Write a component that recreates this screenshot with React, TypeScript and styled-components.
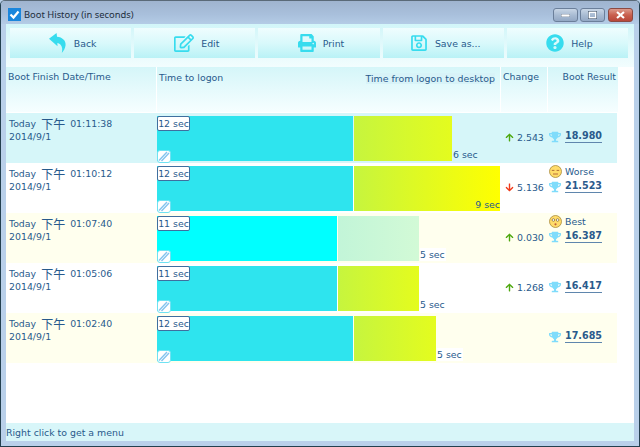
import React from "react";
import styled, { createGlobalStyle } from "styled-components";
import { FaArrowDown, FaArrowUp, FaPrint, FaQuestionCircle, FaRegEdit, FaRegSave, FaTrophy } from "react-icons/fa";

const GlobalStyle = createGlobalStyle`
  html, body {
    margin: 0;
    padding: 0;
    background: #b9cfe8;
  }
`;

const TEXT = "#285a8c";
const FONT = `"DejaVu Sans", "Noto Sans CJK TC", sans-serif`;

const Window = styled.div`
  width: 640px;
  height: 447px;
  box-sizing: border-box;
  display: flex;
  flex-direction: column;
  overflow: hidden;
  font-family: ${FONT};
  font-size: 9.4px;
  color: ${TEXT};
  background: #b9d0ea;
  border: 1px solid #24404f;
  border-top-color: #5a6a78;
  border-radius: 5px 5px 0 0;
`;

const TitleBar = styled.div`
  height: 23px;
  flex: none;
  display: flex;
  align-items: flex-start;
  padding: 7px 6px 0 7px;
  box-sizing: border-box;
  gap: 3px;
  background: linear-gradient(180deg, #9fb4cf 0%, #a9c0dc 60%, #b4cce6 100%);
`;

const TitleText = styled.span`
  flex: 1;
  font-family: "Noto Sans", sans-serif;
  font-size: 9.4px;
  line-height: 14px;
  color: #1d2e3d;
`;

const WinButtons = styled.div`
  display: flex;
  gap: 2px;
`;

const WinButton = styled.div<{ $close?: boolean }>`
  width: 25px;
  height: 14px;
  box-sizing: border-box;
  display: flex;
  align-items: center;
  justify-content: center;
  border: 1px solid ${({ $close }) => ($close ? "#8c4a42" : "#6b7f9a")};
  border-radius: 3px;
  margin-left: ${({ $close }) => ($close ? "1px" : "0")};
  background: ${({ $close }) =>
    $close
      ? "linear-gradient(180deg, #dc9a8c 0%, #c9604f 50%, #b8473a 100%)"
      : "linear-gradient(180deg, #c8d6e6 0%, #a9bcd3 50%, #93a8c4 100%)"};
`;

const Client = styled.div`
  flex: 1;
  min-height: 0;
  display: flex;
  flex-direction: column;
  margin: 0 5px 5px 5px;
  background: #fff;
`;

const Toolbar = styled.div`
  height: 43px;
  flex: none;
  box-sizing: border-box;
  display: flex;
  gap: 3px;
  padding: 4px 6px 9px 4px;
  background: linear-gradient(180deg, #d2f6f9 0%, #f2fdfe 100%);
`;

const ToolButton = styled.div`
  flex: 1;
  display: flex;
  align-items: center;
  justify-content: center;
  gap: 7px;
  padding-left: 4px;
  background: linear-gradient(180deg, #effdfe 0%, #d9f9fb 50%, #b9f2f6 100%);
  svg {
    color: #37dcee;
  }
`;

const Table = styled.div`
  width: 611px;
  display: flex;
  flex-direction: column;
`;

const HeaderRow = styled.div`
  height: 46px;
  display: grid;
  grid-template-columns: 150px 343px 46px 70px;
  column-gap: 1px;
  background: #fff;
`;

const HeaderCell = styled.div<{ $right?: boolean }>`
  height: 45px;
  box-sizing: border-box;
  padding: 4px 2px 0 2px;
  text-align: ${({ $right }) => ($right ? "right" : "left")};
  background: linear-gradient(180deg, #d5f6f9 0%, #f6feff 100%);
`;

const HeaderLabels = styled(HeaderCell)`
  display: flex;
  justify-content: space-between;
  align-items: flex-start;
  padding: 5px 5px 0 2px;
`;

const DesktopLabel = styled.span`
  margin-top: 1px;
  background: #d8f3f8;
`;

const Row = styled.div<{ $bg: string }>`
  height: 50px;
  display: grid;
  grid-template-columns: 151px 343px 46px 71px;
  background: ${({ $bg }) => $bg};
`;

const DateCell = styled.div`
  padding: 3px 0 0 3px;
`;

const DateTop = styled.div`
  display: flex;
  gap: 5px;
  height: 14px;
  align-items: center;
`;

const Cjk = styled.span`
  font-size: 12px;
`;

const DateBottom = styled.div`
  line-height: 13px;
`;

const BarCell = styled.div`
  display: flex;
  padding-top: 3px;
`;

const Bar = styled.div<{ $width: number; $fill: string }>`
  height: 45px;
  width: ${({ $width }) => $width}px;
  flex: none;
  background: ${({ $fill }) => $fill};
  margin-right: 1px;
`;

const LogonBar = styled(Bar)`
  position: relative;
`;

const LogonLabel = styled.div`
  position: absolute;
  top: 0;
  left: 0;
  width: 33px;
  height: 15px;
  box-sizing: border-box;
  background: #fff;
  border: 1px solid #3f6f9f;
  border-radius: 2px;
  line-height: 13px;
  white-space: nowrap;
  text-align: center;
`;

const NoteIcon = styled.svg`
  position: absolute;
  left: 0;
  bottom: -2px;
`;

const DesktopBar = styled(Bar)`
  position: relative;
  margin-right: 0;
`;

const SecInside = styled.span`
  position: absolute;
  right: 0;
  bottom: 0;
  line-height: 13px;
`;

const SecAfter = styled.span<{ $plate: boolean }>`
  align-self: flex-end;
  margin-left: 1px;
  padding-right: 1px;
  line-height: 13px;
  margin-bottom: 2px;
  background: ${({ $plate }) => ($plate ? "#fff" : "transparent")};
`;

const ChangeCell = styled.div`
  display: flex;
  align-items: center;
  gap: 3px;
  padding: 0 0 2px 5px;
`;

const ResultCell = styled.div`
  display: flex;
  flex-direction: column;
  padding: 2px 0 0 3px;
`;

const VerdictLine = styled.div`
  display: flex;
  align-items: center;
  gap: 3px;
  height: 13px;
`;

const ScoreLine = styled.div`
  display: flex;
  align-items: center;
  gap: 4px;
  height: 17px;
  svg {
    color: #7fdcfb;
  }
`;

const Score = styled.span`
  font-size: 9.6px;
  font-weight: 700;
  color: #2a5a8c;
  border-bottom: 1px solid #5f86ad;
  line-height: 12px;
`;

const Spacer = styled.div`
  flex: 1;
`;

const StatusBar = styled.div`
  height: 18px;
  flex: none;
  line-height: 19px;
  background: #d8f6f9;
`;

const BackIcon = () => (
  <svg width="18" height="20" viewBox="0 0 19 21">
    <path
      d="M0 6 L8 0 L8.5 4 C14 4.5 18 8 17.5 13 C17.2 16 15.5 19 13.5 21 C14.5 17.5 14 14 12 12 C11 11 10 10.5 8.8 10.4 L9 14 Z"
      fill="#37dcee"
    />
  </svg>
);

const Smiley = ({ worse }: { worse?: boolean }) => (
  <svg width="13" height="13" viewBox="0 0 13 13">
    <circle cx="6.5" cy="6.5" r="6" fill="#ffdc6a" stroke="#a98a3a" strokeWidth="0.8" />
    {worse ? (
      <>
        <path d="M2.8 5.4 H5.4 M7.6 5.4 H10.2" stroke="#b0703a" strokeWidth="1" />
        <path d="M4 9 H9" fill="none" stroke="#b0603a" strokeWidth="0.9" />
      </>
    ) : (
      <>
        <circle cx="4.4" cy="5" r="1.3" fill="#fff" stroke="#6a5020" strokeWidth="0.6" />
        <circle cx="8.6" cy="5" r="1.3" fill="#fff" stroke="#6a5020" strokeWidth="0.6" />
        <circle cx="6.5" cy="9.3" r="1.1" fill="#c0603a" />
      </>
    )}
  </svg>
);

const Note = () => (
  <NoteIcon width="14" height="13" viewBox="0 0 14 13">
    <rect x="0.5" y="0.5" width="13" height="12" rx="2.5" fill="#fff" stroke="#6fe2f2" />
    <path d="M2 10.5 L10 2 M4.5 11 L12 3" stroke="#84c4ee" strokeWidth="1.4" fill="none" />
  </NoteIcon>
);

const CYAN = "#2ee4ee";
const BRIGHT = "#00ffff";
const LIME = "linear-gradient(90deg, #c6f53e 0%, #e4fc1e 100%)";
const CREAM = "#ffffee";

type BootRow = {
  time: string;
  bg: string;
  logon: number;
  logonLabel: string;
  logonFill: string;
  desktop: number;
  desktopLabel: string;
  desktopFill: string;
  inside?: boolean;
  change?: string;
  down?: boolean;
  verdict?: "Worse" | "Best";
  score: string;
};

const rows: BootRow[] = [
  { time: "01:11:38", bg: "#d6f6f9", logon: 196, logonLabel: "12 sec", logonFill: CYAN, desktop: 98, desktopLabel: "6 sec", desktopFill: LIME, change: "2.543", score: "18.980" },
  { time: "01:10:12", bg: "#ffffff", logon: 196, logonLabel: "12 sec", logonFill: CYAN, desktop: 146, desktopLabel: "9 sec", desktopFill: "linear-gradient(90deg, #c6f53e 0%, #ffff00 100%)", inside: true, change: "5.136", down: true, verdict: "Worse", score: "21.523" },
  { time: "01:07:40", bg: CREAM, logon: 180, logonLabel: "11 sec", logonFill: BRIGHT, desktop: 81, desktopLabel: "5 sec", desktopFill: "linear-gradient(90deg, #c2f5d8 0%, #d2fad6 100%)", change: "0.030", verdict: "Best", score: "16.387" },
  { time: "01:05:06", bg: "#ffffff", logon: 180, logonLabel: "11 sec", logonFill: CYAN, desktop: 81, desktopLabel: "5 sec", desktopFill: LIME, change: "1.268", score: "16.417" },
  { time: "01:02:40", bg: CREAM, logon: 196, logonLabel: "12 sec", logonFill: CYAN, desktop: 82, desktopLabel: "5 sec", desktopFill: LIME, score: "17.685" },
];

const App: React.FC = () => (
  <Window>
    <GlobalStyle />
    <TitleBar>
      <svg width="13" height="13" viewBox="0 0 13 13">
        <rect width="13" height="13" fill="#1a86dc" />
        <path d="M2.5 6.5 L5.5 9.5 L10.5 3.5" stroke="#fff" strokeWidth="2.2" fill="none" />
      </svg>
      <TitleText>Boot History (in seconds)</TitleText>
      <WinButtons>
        <WinButton>
          <svg width="9" height="3" viewBox="0 0 9 3">
            <rect width="9" height="3" fill="#fff" stroke="#44556b" strokeWidth="0.6" />
          </svg>
        </WinButton>
        <WinButton>
          <svg width="9" height="8" viewBox="0 0 9 8">
            <rect x="1" y="1" width="7" height="6" fill="none" stroke="#fff" strokeWidth="2" />
            <rect x="0.3" y="0.3" width="8.4" height="7.4" fill="none" stroke="#44556b" strokeWidth="0.6" />
          </svg>
        </WinButton>
        <WinButton $close>
          <svg width="9" height="8" viewBox="0 0 9 8">
            <path d="M1 1 L8 7 M8 1 L1 7" stroke="#fff" strokeWidth="2.2" />
          </svg>
        </WinButton>
      </WinButtons>
    </TitleBar>
    <Client>
      <Toolbar>
        <ToolButton><BackIcon /><span>Back</span></ToolButton>
        <ToolButton><FaRegEdit size={20} /><span>Edit</span></ToolButton>
        <ToolButton><FaPrint size={18} /><span>Print</span></ToolButton>
        <ToolButton><FaRegSave size={18} /><span>Save as...</span></ToolButton>
        <ToolButton><FaQuestionCircle size={18} /><span>Help</span></ToolButton>
      </Toolbar>
      <Table>
        <HeaderRow>
          <HeaderCell>Boot Finish Date/Time</HeaderCell>
          <HeaderLabels>
            <span>Time to logon</span>
            <DesktopLabel>Time from logon to desktop</DesktopLabel>
          </HeaderLabels>
          <HeaderCell>Change</HeaderCell>
          <HeaderCell $right>Boot Result</HeaderCell>
        </HeaderRow>
        {rows.map((row) => (
          <Row key={row.time} $bg={row.bg}>
            <DateCell>
              <DateTop>
                <span>Today</span>
                <Cjk>下午</Cjk>
                <span>{row.time}</span>
              </DateTop>
              <DateBottom>2014/9/1</DateBottom>
            </DateCell>
            <BarCell>
              <LogonBar $width={row.logon} $fill={row.logonFill}>
                <LogonLabel>{row.logonLabel}</LogonLabel>
                <Note />
              </LogonBar>
              <DesktopBar $width={row.desktop} $fill={row.desktopFill}>
                {row.inside && <SecInside>{row.desktopLabel}</SecInside>}
              </DesktopBar>
              {!row.inside && <SecAfter $plate={row.bg === CREAM}>{row.desktopLabel}</SecAfter>}
            </BarCell>
            <ChangeCell>
              {row.change &&
                (row.down ? (
                  <FaArrowDown size={9} color="#f03a1a" />
                ) : (
                  <FaArrowUp size={9} color="#4ea80e" />
                ))}
              {row.change && <span>{row.change}</span>}
            </ChangeCell>
            <ResultCell>
              <VerdictLine>
                {row.verdict && <Smiley worse={row.verdict === "Worse"} />}
                {row.verdict && <span>{row.verdict}</span>}
              </VerdictLine>
              <ScoreLine>
                <FaTrophy size={12} />
                <Score>{row.score}</Score>
              </ScoreLine>
            </ResultCell>
          </Row>
        ))}
      </Table>
      <Spacer />
      <StatusBar>Right click to get a menu</StatusBar>
    </Client>
  </Window>
);

export default App;
